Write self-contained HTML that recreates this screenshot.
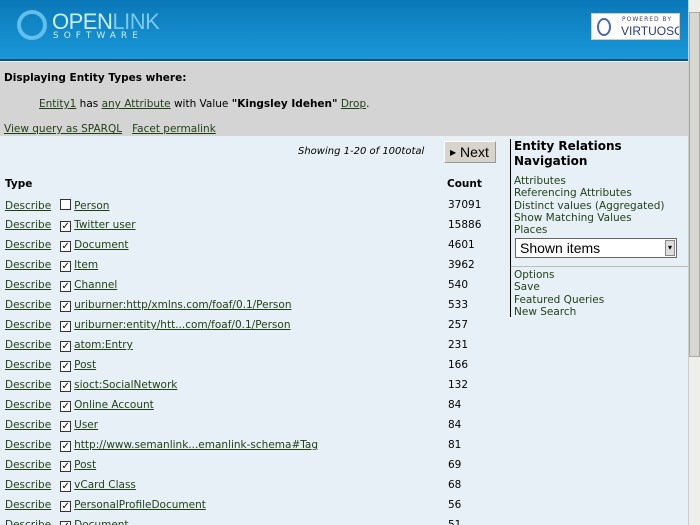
<!DOCTYPE html>
<html><head><style>
*{margin:0;padding:0;box-sizing:border-box}
html,body{width:700px;height:525px;overflow:hidden}
body{background:#e8f0f7;font-family:"DejaVu Sans",Verdana,sans-serif;font-size:10.5px;color:#000;position:relative}
a{color:#1f3f14;text-decoration:underline}
.hdr{position:absolute;left:0;top:0;width:688px;height:61px;background:linear-gradient(#0a78b8,#1a98d8);border-bottom:2px solid #10507a}
.gray{position:absolute;left:0;top:62px;width:688px;height:74px;background:#d4d4d4}
.sb{position:absolute;right:0;top:0;width:12px;height:525px;background:#eeeeea;border-left:1px solid #ccc}
.sb .t{position:absolute;left:0;top:12px;width:11px;height:345px;background:#d8d8d0;border:1px solid #aaa}
.abs{position:absolute;white-space:nowrap}
.row{position:absolute;left:5px;height:20px;white-space:nowrap}
.cb{display:inline-block;width:11px;height:11px;border:1px solid #333;background:#fff;vertical-align:-1px;margin:0 3px 0 9px;font-size:10px;line-height:9px;text-align:center;font-weight:bold}
.cnt{position:absolute;left:443px}
.nav a{text-decoration:none;display:block;line-height:12.3px;font-size:10.5px}
</style></head><body>
<div class="hdr">
 <div class="abs" style="left:17px;top:10px;width:30px;height:30px;border-radius:50%;border:4px solid #6cc4ee;opacity:.9"></div>
 <div class="abs" style="left:52px;top:9px;color:#cdeeff;font-size:22px;font-family:'Liberation Sans Narrow','Liberation Sans',sans-serif;letter-spacing:-0.5px">OPEN<span style="color:#7cc8ee">LINK</span></div>
 <div class="abs" style="left:53px;top:31px;color:#cdeeff;font-size:9px;letter-spacing:5px">SOFTWARE</div>
 <div class="abs" style="left:591px;top:13px;width:89px;height:27px;background:#fff;border:1px solid #ccc;overflow:hidden">
  <div class="abs" style="left:5px;top:4px;width:14px;height:18px;border:2px solid #4a6ab0;border-radius:50%"></div>
  <div class="abs" style="left:30px;top:2px;font-size:6px;color:#446;letter-spacing:1px">POWERED BY</div>
  <div class="abs" style="left:29px;top:10px;font-size:12px;color:#2a3a8a;font-family:'Liberation Sans Narrow',sans-serif">VIRTUOSO</div>
 </div>
</div>
<div class="gray">
 <div class="abs" style="left:4px;top:10px;font-weight:bold">Displaying Entity Types where:</div>
 <div class="abs" style="left:39px;top:36px"><a href="#">Entity1</a> has <a href="#">any Attribute</a> with Value <b>"Kingsley Idehen"</b> <a href="#">Drop</a>.</div>
 <div class="abs" style="left:4px;top:61px"><a href="#">View query as SPARQL</a> &nbsp; <a href="#">Facet permalink</a></div>
</div>
<div class="abs" style="left:298px;top:146px;font-style:italic;font-size:10px">Showing 1-20 of 100total</div>
<div class="abs" style="left:444px;top:141px;width:52px;height:22px;background:#d8d4cc;border:1px solid #999;border-top-color:#fff;border-left-color:#fff;font-family:'Liberation Sans',sans-serif;font-size:14px;line-height:20px;padding-left:5px"><span style="font-size:8px;vertical-align:2px">▶</span> Next</div>
<div class="abs" style="left:510px;top:139px;width:1px;height:178px;background:#000"></div>
<div class="abs" style="left:514px;top:139px;font-weight:bold;font-size:12px;line-height:15px">Entity Relations<br>Navigation</div>
<div class="abs nav" style="left:514px;top:175px"><a>Attributes</a><a>Referencing Attributes</a><a>Distinct values (Aggregated)</a><a>Show Matching Values</a><a>Places</a></div>
<div class="abs" style="left:515px;top:238px;width:162px;height:20px;background:#fff;border:1px solid #666;font-family:'Liberation Sans',sans-serif;font-size:14px;line-height:18px;padding-left:4px">Shown items<div class="abs" style="right:1px;top:1px;width:10px;height:16px;background:#ddd;border:1px solid #888;font-size:8px;line-height:14px;text-align:center">▾</div></div>
<div class="abs" style="left:511px;top:266px;width:177px;height:1px;background:#bbb"></div>
<div class="abs nav" style="left:514px;top:269px"><a>Options</a><a>Save</a><a>Featured Queries</a><a>New Search</a></div>
<div class="abs" style="left:5px;top:178px;font-weight:bold">Type</div>
<div class="abs" style="left:447px;top:178px;font-weight:bold">Count</div>
<div class="row" style="top:199px"><a>Describe</a><span class="cb"></span><a>Person</a><span class="cnt">37091</span></div>
<div class="row" style="top:219px"><a>Describe</a><span class="cb">✓</span><a>Twitter user</a><span class="cnt">15886</span></div>
<div class="row" style="top:239px"><a>Describe</a><span class="cb">✓</span><a>Document</a><span class="cnt">4601</span></div>
<div class="row" style="top:259px"><a>Describe</a><span class="cb">✓</span><a>Item</a><span class="cnt">3962</span></div>
<div class="row" style="top:279px"><a>Describe</a><span class="cb">✓</span><a>Channel</a><span class="cnt">540</span></div>
<div class="row" style="top:299px"><a>Describe</a><span class="cb">✓</span><a>uriburner:http/xmlns.com/foaf/0.1/Person</a><span class="cnt">533</span></div>
<div class="row" style="top:319px"><a>Describe</a><span class="cb">✓</span><a>uriburner:entity/htt...com/foaf/0.1/Person</a><span class="cnt">257</span></div>
<div class="row" style="top:339px"><a>Describe</a><span class="cb">✓</span><a>atom:Entry</a><span class="cnt">231</span></div>
<div class="row" style="top:359px"><a>Describe</a><span class="cb">✓</span><a>Post</a><span class="cnt">166</span></div>
<div class="row" style="top:379px"><a>Describe</a><span class="cb">✓</span><a>sioct:SocialNetwork</a><span class="cnt">132</span></div>
<div class="row" style="top:399px"><a>Describe</a><span class="cb">✓</span><a>Online Account</a><span class="cnt">84</span></div>
<div class="row" style="top:419px"><a>Describe</a><span class="cb">✓</span><a>User</a><span class="cnt">84</span></div>
<div class="row" style="top:439px"><a>Describe</a><span class="cb">✓</span><a>http://www.semanlink...emanlink-schema#Tag</a><span class="cnt">81</span></div>
<div class="row" style="top:459px"><a>Describe</a><span class="cb">✓</span><a>Post</a><span class="cnt">69</span></div>
<div class="row" style="top:479px"><a>Describe</a><span class="cb">✓</span><a>vCard Class</a><span class="cnt">68</span></div>
<div class="row" style="top:499px"><a>Describe</a><span class="cb">✓</span><a>PersonalProfileDocument</a><span class="cnt">56</span></div>
<div class="row" style="top:519px"><a>Describe</a><span class="cb">✓</span><a>Document</a><span class="cnt">51</span></div>
<div class="sb"><div class="t"></div></div>
</body></html>
